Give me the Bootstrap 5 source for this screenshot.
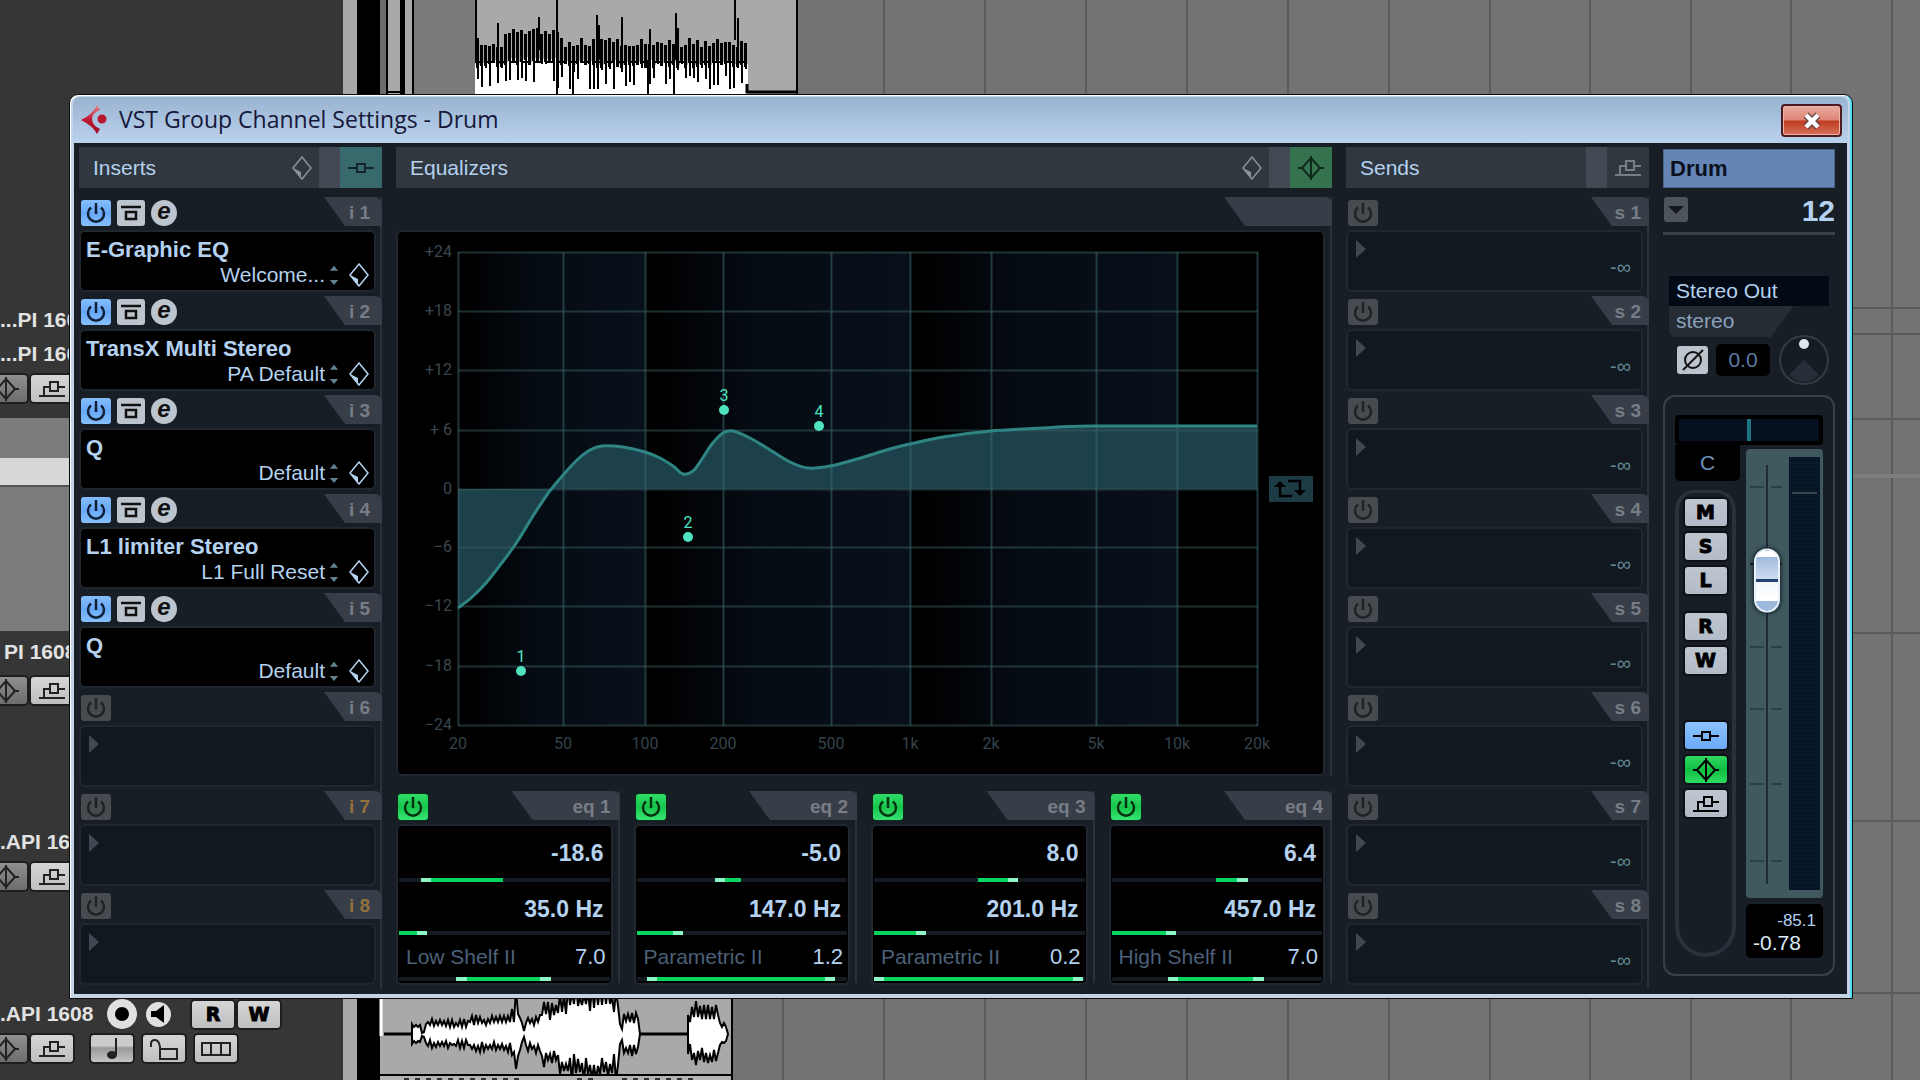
<!DOCTYPE html>
<html lang="en">
<head>
<meta charset="utf-8">
<meta name="viewport" content="width=device-width, initial-scale=1">
<title>VST Group Channel Settings - Drum</title>
<link href="https://cdn.jsdelivr.net/npm/bootstrap@5.3.0/dist/css/bootstrap.min.css" rel="stylesheet">
<style>
:root{--ice:#b4d2ef;--panel:#181e26;--edge:#20272f;--tab:#373e48;--muted:#777d86}
body{background:#727272;font-family:"Liberation Sans",Arial,sans-serif;font-size:21px;line-height:24px;color:var(--ice)}
button{border:0;padding:0;font-family:inherit}
svg{display:block}
.ico{fill:none;stroke:currentColor;stroke-width:2}
.desk{min-height:100vh}
.backdrop-art{position:absolute;inset:0;width:100%;height:100%}

/* track list behind the dialog */
.tracks{width:343px;min-height:100vh;background:#363636;color:#e2e2e2;font-weight:700}
.tk-top{height:418px;padding-bottom:16px}
.tk-line{height:34px;line-height:34px;white-space:nowrap}
.tk-gray{background:#7b7b7b}
.tk-sel{height:27px;background:#d8d8d8}
.chip{width:42px;height:27px;border-radius:3px;background:linear-gradient(#d6d6d6,#bfbfbf);color:#222;display:flex;align-items:center;justify-content:center;box-shadow:0 0 0 2px #1e1e1e;flex:none}
.chip-dim{background:linear-gradient(#8f8f8f,#6d6d6d)}
.chip-bold{font:700 19px/27px "DejaVu Sans",sans-serif;color:#000;-webkit-text-stroke:1px #000}
.orb{border-radius:50%;background:#e0e0e0;flex:none;display:flex;align-items:center;justify-content:center;color:#111}
.tk-off{margin-left:-15px}

/* dialog */
.dlg{position:absolute;left:69px;right:67px;top:94px;border:1px solid #0c0c0c;border-radius:9px 9px 0 0;background:#c4d3e6;box-shadow:inset 1px 1px #fff,inset -2px 0 #4fe0f4;padding:1px 5px 4px 4px}
.dlg-title{height:46px;background:linear-gradient(#98b3d0,#bbd2ee);margin:1px -1px 0 -1px;border-radius:7px 7px 0 0;padding:0 6px 0 8px;color:#15183a;font:400 23px/45px "Open Sans",sans-serif}
.closer{width:61px;height:33px;border:2px solid #4d1a1e;border-radius:4px;background:linear-gradient(#e9aba0,#df8476 48%,#bf3c22 52%,#d9705a);box-shadow:inset 0 0 0 1px #f0b3aa}
.dlg-main{background:var(--panel);display:grid;grid-template-columns:303px minmax(0,1fr) 303px 172px;column-gap:14px;padding:4px 12px 5px 5px}
.head{height:41px;background:#31373f;margin-bottom:9px;padding-left:14px}
.head h2{font-size:21px;line-height:41px;font-weight:400;margin:0}
.head .sep{width:21px;background:#434952}
.head .hb{width:42px;background:transparent;color:#777d85;display:flex;align-items:center;justify-content:center}
.head .hb-teal{background:#38696c;color:#10262a}
.head .hb-green{background:#35734f;color:#10291d}
.head .gem{width:34px;background:transparent;color:#8d9299}

.slot{height:99px;border-right:2px solid #2b313a}
.slot-top{height:29px;margin-bottom:4px;padding:3px 0 0 2px}
.tabby{position:relative;width:58px;height:29px;margin:-3px -2px 0 auto;background:var(--tab);clip-path:polygon(0 0,100% 0,100% 100%,21px 100%);color:var(--muted);font-weight:700;font-size:19px;line-height:31px;text-align:right;padding-right:12px;border-top-right-radius:7px}
.tab-s{padding-right:8px}
.tab-wide{width:108px;padding-right:9px}
.tab-amber{color:#94713c}
.pwr{width:30px;height:26px;border-radius:3px;background:#474b50;color:#1f2226;display:flex;align-items:center;justify-content:center}
.pwr-on{background:linear-gradient(#83bdfc,#68a8f8 50%,#85c0ff);color:#0f2036}
.pwr-eq{background:linear-gradient(#2fdc69,#19c64c 50%,#35e573);color:#06330f;box-shadow:0 0 0 1px #0b2b18}
.mini{width:28px;height:26px;border-radius:3px;background:#bcc4cd;color:#111;display:flex;align-items:center;justify-content:center}
.mini-e{width:26px;border-radius:50%;font:italic 700 24px/20px "Liberation Sans";padding-bottom:4px}
.well{height:62px;margin-right:4px;border:2px solid var(--edge);border-radius:6px;background:#12181f;position:relative}
.well-on{background:#000;padding:6px 5px 0 5px}
.well-on strong{display:block;font-size:22px;line-height:24px}
.well-on .preset{height:26px;color:var(--ice)}
.plain{background:transparent;color:inherit}
.arrow{padding:8px 0 0 8px;color:#414852}
.inf{padding:23px 10px 0 0;font-size:20px;color:#5f8790}

.eqcol{border-right:2px solid #2b313a}
.eqtop{height:29px;margin-bottom:4px;padding-top:3px}
.graph{margin-right:5px;height:546px;border:2px solid var(--edge);border-radius:6px;background:#000;margin-bottom:15px}
.graph svg.plot{flex:1 1 0;min-width:0;height:542px;overflow:visible;font-family:Roboto,sans-serif;font-size:16px}
.loop{width:44px;height:26px;background:#1d3b45;color:#000;margin:0 10px 28px 0;flex:none}
.bands{display:grid;grid-template-columns:repeat(4,minmax(0,1fr));column-gap:14px}
.band{border-right:2px solid #2b313a;height:192px}
.bandbox{height:161px;margin-right:5px;border:2px solid var(--edge);border-radius:6px;background:#000}
.bandbox b{display:block;font-size:23px;text-align:right;padding-right:7px}
.b1{height:52px;line-height:54px}.b2{height:49px;line-height:54px}
.b3{height:42px;line-height:43px;padding:0 5px 0 8px}
.b3 span{color:#4c6079}.b3 output{font-size:22px}
.trk{appearance:none;-webkit-appearance:none;display:block;height:4px;width:calc(100% - 2px);margin:0 1px;background:#141b22}
.trk::-webkit-slider-thumb{-webkit-appearance:none;width:10px;height:4px;background:transparent}

/* channel strip */
.nm{height:39px;margin:2px 0 0;background:#6485b6;color:#0a1020;font-weight:700;font-size:22px;line-height:37px;padding-left:6px;border:1px solid #4c658c}
.nrow{height:47px;border-bottom:3px solid #3a4048;margin-bottom:41px;padding:9px 0 0 1px}
.nrow b{font-size:30px;line-height:28px}
.dd{width:24px;height:25px;border-radius:3px;background:#4e545c}
.outp{height:30px;margin:0 6px;width:160px;background:#020a16;color:var(--ice);text-align:left;padding-left:7px;line-height:26px}
.inp{height:31px;width:125px;margin:0 6px;background:#252c34;clip-path:polygon(0 0,100% 0,102px 100%,4px 100%,0 27px);color:#8ba3bd;padding-left:7px;line-height:30px}
.gain{height:45px;padding:0 5px 0 14px;margin-bottom:13px}
.zero{width:54px;height:32px;border-radius:5px;background:#000;color:#5b7ba3;text-align:center;line-height:32px}
.strip{border:2px solid #3a4048;border-radius:12px;height:581px;padding:18px 10px 0}
.pan{height:30px;border:4px solid #000;border-radius:4px;background:#06101f}
.pan i{width:4px;height:100%;background:#1b7384;margin:auto;display:block}
.cee{height:36px;background:#000;border-radius:0 0 5px 5px;color:#6d90bd;text-align:center;line-height:36px;width:65px}
.pill{width:61px;height:467px;margin-top:9px;border:4px solid #2a313b;border-top-width:3px;border-radius:20px 20px 31px 31px;padding-top:6px}
.key{width:42px;height:27px;border-radius:3px;background:linear-gradient(#bec6d0,#b2bbc7);color:#000;margin-bottom:7px;font:700 19px/27px "DejaVu Sans",sans-serif;-webkit-text-stroke:1px #000;box-shadow:0 0 0 2px #0d1116;display:flex;align-items:center;justify-content:center}
.k-blue{background:linear-gradient(#8cc2fd,#6aaafa);margin-top:48px}
.k-green{background:linear-gradient(#2fd862,#12be41 50%,#2cdc62)}
.fader{width:77px;height:449px;margin-top:4px;background:#3f595e;border-radius:4px;position:relative}
.fader svg{position:absolute;inset:0}
.fader input{position:absolute;left:21px;top:50%;width:449px;height:26px;transform:translate(-50%,-50%) rotate(-90deg);appearance:none;-webkit-appearance:none;background:transparent;margin:0}
.fader input::-webkit-slider-thumb{-webkit-appearance:none;width:64px;height:26px;border-radius:13px;border:2px solid #e8f0fa;background:linear-gradient(270deg,#fff 0 7px,#9fbbdd 7px,#cfdef0 29px,#23406e 29px 32px,#f2f7fd 32px,#fff 51px,#9db9dc 51px);box-shadow:0 0 4px 1px #14202a}
.read{width:77px;height:54px;margin-top:6px;background:#000;border-radius:5px;padding:7px 7px 0}
.read span{display:block;font-size:17px;line-height:20px;text-align:right}
.read b{display:block;font-weight:400;font-size:21px;line-height:23px;color:#dceafa}
</style>
<script src="https://cdn.jsdelivr.net/npm/bootstrap@5.3.0/dist/js/bootstrap.bundle.min.js"></script>
</head>
<body>
<svg width="0" height="0" class="position-absolute">
  <symbol id="i-power" viewBox="0 0 22 22"><path d="M6 5.500A8 8 0 1 0 16 5.500M11 1V12" fill="none" stroke="currentColor" stroke-width="2.500"/></symbol>
  <symbol id="i-byp" viewBox="0 0 22 20"><path d="M1 4H21M6 9H16V16H6Z" fill="none" stroke="currentColor" stroke-width="2.500"/></symbol>
  <symbol id="i-node" viewBox="0 0 26 14"><path d="M0 7H9M17 7H26M9 3H17V11H9Z" fill="none" stroke="currentColor" stroke-width="2"/></symbol>
  <symbol id="i-eq" viewBox="0 0 26 24"><path d="M0 12H4L13 2L22 12H26M4 12L13 22L22 12M13 0V24" fill="none" stroke="currentColor" stroke-width="2"/></symbol>
  <symbol id="i-send" viewBox="0 0 26 18"><path d="M0 16H26M5 16V7H11M19 7H26M11 2H19V11H11Z" fill="none" stroke="currentColor" stroke-width="2"/></symbol>
  <symbol id="i-gem" viewBox="0 0 20 24"><path d="M10 1L19 12L10 23L1 12Z" fill="none" stroke="currentColor" stroke-width="1.500"/><path d="M1 12L9 16V23Z" fill="currentColor"/></symbol>
  <symbol id="i-spin" viewBox="0 0 10 24"><path d="M5 1L10 7H0ZM5 24L10 18H0Z" fill="#5f8490"/></symbol>
</svg>

<div class="desk position-relative overflow-hidden">
  <svg class="backdrop-art" viewBox="0 0 1920 1080" preserveAspectRatio="xMinYMin slice" id="art" aria-hidden="true"></svg>

  <aside class="tracks position-relative">
    <div class="tk-top d-flex flex-column justify-content-end">
      <div class="tk-line">...PI 1608</div>
      <div class="tk-line">...PI 1608</div>
      <div class="d-flex gap-1 mt-1 tk-off"><span class="chip chip-dim"><svg width="26" height="24"><use href="#i-eq"/></svg></span><span class="chip"><svg width="26" height="18"><use href="#i-send"/></svg></span></div>
    </div>
    <div class="tk-gray" style="height:40px"></div>
    <div class="tk-sel"></div>
    <div class="tk-gray" style="height:146px;border-top:2px solid #555"></div>
    <div class="d-flex flex-column">
      <div class="tk-line mt-1 mb-2 ps-1">PI 1608</div>
      <div class="d-flex gap-1 tk-off"><span class="chip chip-dim"><svg width="26" height="24"><use href="#i-eq"/></svg></span><span class="chip"><svg width="26" height="18"><use href="#i-send"/></svg></span></div>
      <div style="height:121px"></div>
      <div class="tk-line mb-1">.API 1608</div>
      <div class="d-flex gap-1 tk-off"><span class="chip chip-dim"><svg width="26" height="24"><use href="#i-eq"/></svg></span><span class="chip"><svg width="26" height="18"><use href="#i-send"/></svg></span></div>
      <div style="height:107px"></div>
      <div class="d-flex align-items-center tk-line mb-1">
        <span style="width:107px">.API 1608</span>
        <button class="orb" style="width:30px;height:30px" aria-label="Record"><svg width="14" height="14"><circle cx="7" cy="7" r="7"/></svg></button>
        <button class="orb" style="width:25px;height:25px;margin-left:9px" aria-label="Monitor"><svg width="16" height="18"><path d="M0 6H5L13 0V18L5 12H0Z"/></svg></button>
        <button class="chip chip-bold" style="margin-left:21px">R</button>
        <button class="chip chip-bold ms-1">W</button>
      </div>
      <div class="d-flex tk-off">
        <span class="chip chip-dim"><svg width="26" height="24"><use href="#i-eq"/></svg></span>
        <span class="chip ms-1"><svg width="26" height="18"><use href="#i-send"/></svg></span>
        <button class="chip" style="margin-left:18px;background:linear-gradient(#ccc,#ccc 40%,#999 48%,#c4c4c4)" aria-label="Musical time"><svg width="12" height="22"><path d="M10 0V17" class="ico"/><ellipse cx="6" cy="17" rx="5" ry="4" fill="#222"/></svg></button>
        <button class="chip" style="margin-left:10px" aria-label="Lock"><svg width="30" height="22" class="ico"><path d="M2 9V6Q2 2 6 2T11 9V12M11 11H28V21H11Z"/></svg></button>
        <button class="chip" style="margin-left:10px" aria-label="Lanes"><svg width="30" height="14" class="ico"><path d="M1 1H29V13H1ZM10 1V13M20 1V13" /></svg></button>
      </div>
    </div>
  </aside>

  <section class="dlg" role="dialog" aria-labelledby="ttl">
    <div class="dlg-title d-flex align-items-start">
      <svg width="26" height="30" viewBox="0 0 26 30" class="mt-2"><defs><linearGradient id="rg" x2="0" y2="1"><stop stop-color="#e88a90"/><stop offset=".5" stop-color="#c01830"/><stop offset="1" stop-color="#a01028"/></linearGradient></defs><path d="M16 0L19 5Q11 8 11 14T19 24L16 29Q12 21 0 15Q11 10 16 0Z" fill="url(#rg)"/><circle cx="21" cy="14" r="4.500" fill="#b81730"/></svg>
      <span id="ttl" class="flex-grow-1 ms-2 ps-1">VST Group Channel Settings - Drum</span>
      <button class="closer" style="margin-top:7px" aria-label="Close"><svg width="22" height="18" viewBox="0 0 22 18" class="mx-auto"><path d="M5 3L17 15M17 3L5 15" stroke="#5d4040" stroke-width="7"/><path d="M5 3L17 15M17 3L5 15" stroke="#fff" stroke-width="4.500"/></svg></button>
    </div>
    <div class="dlg-main">
      <section>
        <div class="head d-flex"><h2 class="flex-grow-1">Inserts</h2><button class="gem" aria-label="Insert presets"><svg width="20" height="24" class="mx-auto"><use href="#i-gem"/></svg></button><span class="sep"></span><button class="hb hb-teal" aria-label="Bypass inserts"><svg width="26" height="14"><use href="#i-node"/></svg></button></div>
        <div id="inserts"></div>
      </section>
      <section>
        <div class="head d-flex"><h2 class="flex-grow-1">Equalizers</h2><button class="gem" aria-label="Equalizer presets"><svg width="20" height="24" class="mx-auto"><use href="#i-gem"/></svg></button><span class="sep"></span><button class="hb hb-green" aria-label="Bypass equalizers"><svg width="26" height="24"><use href="#i-eq"/></svg></button></div>
        <div class="eqcol">
          <div class="eqtop"><div class="tabby tab-wide"></div></div>
          <div class="graph d-flex align-items-center">
            <svg class="plot" viewBox="398 233 871 542" preserveAspectRatio="none" id="plot" role="img" aria-label="Equalizer curve"></svg>
            <button class="loop" aria-label="Reset curve"><svg width="44" height="26"><path d="M11 7V20H23M19 5H31V17" fill="none" stroke="#000" stroke-width="2.500"/><path d="M5 11L11 5L17 11ZM25 14L31 20L37 14Z"/></svg></button>
          </div>
        </div>
        <div class="bands" id="bands"></div>
      </section>
      <section>
        <div class="head d-flex"><h2 class="flex-grow-1">Sends</h2><span class="sep"></span><button class="hb" aria-label="Bypass sends"><svg width="26" height="18"><use href="#i-send"/></svg></button></div>
        <div id="sends"></div>
      </section>
      <section>
        <div class="nm">Drum</div>
        <div class="nrow d-flex justify-content-between"><button class="dd" aria-label="Channel menu"><svg width="24" height="14"><path d="M4 3H20L12 11Z" fill="#14181e"/></svg></button><b>12</b></div>
        <button class="outp d-block">Stereo Out</button>
        <div class="inp">stereo</div>
        <div class="gain d-flex align-items-center justify-content-between">
          <button class="mini" style="width:31px;height:28px" aria-label="Phase"><svg width="26" height="26" class="ico"><circle cx="13" cy="13" r="8"/><path d="M3 23L23 3"/></svg></button>
          <div class="zero">0.0</div>
          <svg width="52" height="52" role="img" aria-label="Input gain"><circle cx="26" cy="26" r="24" fill="#161c23" stroke="#343a43" stroke-width="2"/><path d="M26 26L11 41Q26 55 41 41Z" fill="#272e37"/><circle cx="26" cy="10" r="5" fill="#dfe6ec"/></svg>
        </div>
        <div class="strip">
          <div class="pan"><i></i></div>
          <div class="d-flex justify-content-between">
            <div>
              <div class="cee">C</div>
              <div class="pill d-flex flex-column align-items-center">
                <button class="key">M</button><button class="key">S</button><button class="key" style="margin-bottom:19px">L</button><button class="key">R</button><button class="key mb-0">W</button>
                <button class="key k-blue" aria-label="Inserts"><svg width="26" height="14"><use href="#i-node"/></svg></button>
                <button class="key k-green" aria-label="Equalizers"><svg width="26" height="24"><use href="#i-eq"/></svg></button>
                <button class="key" aria-label="Sends"><svg width="26" height="18"><use href="#i-send"/></svg></button>
              </div>
            </div>
            <div>
              <div class="fader">
                <svg width="77" height="449" id="fsvg"></svg>
                <input type="range" aria-label="Volume" min="0" max="1000" value="743">
              </div>
              <div class="read"><span>-85.1</span><b>-0.78</b></div>
            </div>
          </div>
        </div>
      </section>
    </div>
  </section>
</div>

<script>
const power='<svg width="22" height="22"><use href="#i-power"/></svg>';
const tri='<div class="arrow"><svg width="10" height="18"><path d="M0 0L10 9L0 18Z" fill="currentColor"/></svg></div>';
const ins=[['E-Graphic EQ','Welcome...'],['TransX Multi Stereo','PA Default'],['Q','Default'],['L1 limiter Stereo','L1 Full Reset'],['Q','Default']];
let h='';
for(let i=0;i<8;i++){
  const on=ins[i];
  h+=`<div class="slot"><div class="slot-top d-flex"><button class="pwr ${on?'pwr-on':''}" aria-label="Insert ${i+1} on">${power}</button>`+
  (on?`<button class="mini" style="margin:0 6px" aria-label="Bypass ${i+1}"><svg width="22" height="20"><use href="#i-byp"/></svg></button><button class="mini mini-e">e</button>`:'')+
  `<div class="tabby ${i>5?'tab-amber':''}">i ${i+1}</div></div>`+
  (on?`<div class="well well-on"><strong>${on[0]}</strong><div class="preset d-flex justify-content-end align-items-center"><button class="plain">${on[1]}</button><svg width="10" height="20" style="margin:0 10px 0 4px"><use href="#i-spin"/></svg><svg width="20" height="24"><use href="#i-gem"/></svg></div></div>`:`<div class="well">${tri}</div>`)+'</div>';
}
inserts.innerHTML=h;
h='';
for(let i=1;i<9;i++)h+=`<div class="slot"><div class="slot-top d-flex"><button class="pwr" aria-label="Send ${i} on">${power}</button><div class="tabby tab-s">s ${i}</div></div><div class="well d-flex justify-content-between">${tri}<span class="inf">-∞</span></div></div>`;
sends.innerHTML=h;

/* each track is a list of [from, to, lit] segments, in 212ths of its width */
const data=[
 ['-18.6','35.0 Hz','Low Shelf II','7.0',[[22,32,1],[32,105,0]],[[0,18,0],[18,28,1]],[[57,68,1],[68,142,0],[142,153,1]]],
 ['-5.0','147.0 Hz','Parametric II','1.2',[[79,89,1],[89,105,0]],[[0,36,0],[36,46,1]],[[10,20,1],[20,190,0],[190,200,1]]],
 ['8.0','201.0 Hz','Parametric II','0.2',[[105,135,0],[135,145,1]],[[0,42,0],[42,52,1]],[[0,10,1],[10,200,0],[200,210,1]]],
 ['6.4','457.0 Hz','High Shelf II','7.0',[[105,126,0],[126,137,1]],[[0,55,0],[55,65,1]],[[57,67,1],[67,142,0],[142,153,1]]]];
function range(s,l){
  const p=v=>(v/2.12).toFixed(1)+'%',c=[`#141b22 ${p(s[0][0])}`];
  s.forEach(a=>c.push(`${a[2]?'#8df5c6':'#06d65f'} ${p(a[0])} ${p(a[1])}`));
  c.push(`#141b22 ${p(s[s.length-1][1])}`);
  return `<input type="range" class="trk" aria-label="${l}" style="background:linear-gradient(90deg,${c})">`;
}
bands.innerHTML=data.map((d,i)=>`<div class="band"><div class="slot-top d-flex"><button class="pwr pwr-eq" aria-label="Band ${i+1} on">${power}</button><div class="tabby tab-wide">eq ${i+1}</div></div><div class="bandbox"><b class="b1">${d[0]}</b>${range(d[4],'Gain')}<b class="b2">${d[1]}</b>${range(d[5],'Frequency')}<div class="b3 d-flex justify-content-between"><span>${d[2]}</span><output>${d[3]}</output></div>${range(d[6],'Quality')}</div></div>`).join('');

/* equalizer plot */
const xs=[458,563,645,723,831,910,991,1096,1177,1257],xl=['20','50','100','200','500','1k','2k','5k','10k','20k'];
const ys=[253,312,371,431,490,548,607,667,726],yl=['+24','+18','+12','+ 6','0','−6','−12','−18','−24'];
let g='<defs><linearGradient id="bg"><stop offset="0" stop-color="#000"/><stop offset=".12" stop-color="#010204"/><stop offset=".4" stop-color="#050b12"/><stop offset="1" stop-color="#08101a"/></linearGradient></defs>';
[[458,645],[645,910],[910,1177]].forEach(b=>g+=`<rect x="${b[0]}" y="253" width="${b[1]-b[0]}" height="473" fill="url(#bg)"/>`);
const pts=[[458,609],[471,599],[486,584],[501,565],[517,543],[533,517],[549,493],[564,475],[577,461],[590,451],[602,447],[623,448],[645,453],[660,459],[673,467],[683,475],[693,472],[702,460],[712,445],[723,434],[733,432],[750,439],[767,449],[790,463],[808,469],[830,467],[857,460],[890,450],[910,445],[943,438],[991,432],[1043,429],[1093,427],[1257,427]];
let dd='M'+pts[0];
for(let i=0;i<pts.length-1;i++){const a=pts[i-1]||pts[i],b=pts[i],c=pts[i+1],e=pts[i+2]||c;const k=(c[0]-b[0])>100?0:1/6;dd+=`C${b[0]+(c[0]-a[0])*k} ${b[1]+(c[1]-a[1])*k} ${c[0]-(e[0]-b[0])*k} ${c[1]-(e[1]-b[1])*k} ${c}`;}
g+=`<path d="${dd}V490H458Z" fill="#1f444f" fill-opacity=".95"/>`;
xs.forEach((x,i)=>g+=`<path d="M${x+.5} 253V727" stroke="#3b6d70" stroke-opacity=".5" stroke-width="2"/><text x="${x}" y="750" text-anchor="middle" fill="#34434b">${xl[i]}</text>`);
ys.forEach((y,i)=>g+=`<path d="M458 ${y+.5}H1258" stroke="#3b5f62" stroke-opacity=".5" stroke-width="2"/><text x="452" y="${y+5}" text-anchor="end" fill="#3a464e">${yl[i]}</text>`);
g+=`<path d="${dd}" fill="none" stroke="#2f8583" stroke-width="3"/>`;
[[521,672],[688,538],[724,411],[819,427]].forEach((p,i)=>g+=`<circle cx="${p[0]}" cy="${p[1]}" r="5" fill="#4fe3c0"/><text x="${p[0]}" y="${p[1]-9}" text-anchor="middle" fill="#4fe3c0">${i+1}</text>`);
plot.innerHTML=g;

/* fader scale and level meter */
let f='<path d="M21 16V435" stroke="#1f2c3c" stroke-width="2"/>';
[38,115,198,260,335,412].forEach((y,i)=>f+=`<path d="M4 ${y}H18M25 ${y}H36" stroke="${i==1?'#0c1216':'#2a4046'}" stroke-width="2"/>`);
f+='<rect x="43" y="8" width="31" height="433" fill="#051426"/>';
for(let y=10;y<440;y+=4)f+=`<path d="M43 ${y}H74" stroke="#0c2029"/>`;
f+='<path d="M46 44H71" stroke="#3c444e" stroke-width="2"/>';
fsvg.innerHTML=f;

/* arrange window: grid and audio clips */
let seed=7;const rnd=()=>(seed=(seed*16807)%2147483647)/2147483647;
let a='<rect x="343" width="1577" height="1080" fill="#737373"/><rect x="343" width="14" height="1080" fill="#a8a8a8"/><rect x="357" width="23" height="1080" fill="#000"/>';
a+='<g stroke="#5b5b5b" stroke-width="2">';
[783,884,985,1086,1187,1288,1389,1490,1590,1691,1791,1892].forEach(x=>a+=`<path d="M${x} 0V1080"/>`);
[308,334,419,633,821,993].forEach(y=>a+=`<path d="M1800 ${y}H1920"/>`);
a+='</g><path d="M1800 476H1920" stroke="#7e7e7e" stroke-width="4"/>';
a+='<rect x="380" width="8" height="95" fill="#6c6c6c"/><rect x="388" width="25" height="95" fill="#a9a9a9"/><rect x="400" width="5" height="95"/><path d="M387 0V95M413 0V95M388 92H405" stroke="#000" stroke-width="2"/><rect x="414" width="61" height="95" fill="#7a7a7a"/><rect x="475" width="322" height="95" fill="#a9a9a9"/>';
/* drum loop: black peaks over a white body */
let wh='M475 94V62',bars='';
for(let x=476;x<746;x+=4){
  const rise=x>500&&x<560?13:0,t=(43-rise+rnd()*10-5)|0,m=(60-rise/4+rnd()*6)|0;
  const dip=rnd()<.5?(76+rnd()*15)|0:(m+rnd()*8)|0;
  wh+=`L${x} ${m}H${x+4}`;
  bars+=`<rect x="${x}" y="${t}" width="3" height="${m-t+3}"/><rect x="${x+1}" y="${m}" width="2" height="${dip-m}"/>`;
}
a+=`<path d="${wh}V94Z" fill="#fff"/>${bars}<path d="M475 62H745" stroke="#000" stroke-width="2" stroke-dasharray="7 5"/>`;
a+='<path d="M476 0V62M557 0V94M735 0V40M797 0V94" stroke="#000" stroke-width="2"/><path d="M597 15V50M599 25V60M622 17V55M676 13V60M678 28V60M738 18V62M498 23V50M539 17V50M650 29V60M573 64V94M648 60V94M674 60V94" stroke="#000" stroke-width="2"/><path d="M747 84V92H797" fill="none" stroke="#000" stroke-width="3"/>';
a+='<rect x="380" y="995" width="353" height="85" fill="#a9a9a9"/><path d="M381 995V1036" stroke="#fff" stroke-width="3"/><path d="M384 1034H728" stroke="#000" stroke-width="3"/>';
const amp=x=>x<422?8:x<426?2:x<470?11:x<512?14:x<515?20:x<519?34:x<523?12:x<526?3:x<542?15:x<558?25:x<620?36:x<624?8:x<640?17:0;
function blob(x0,x1,fn){let t='',b='';for(let x=x0;x<=x1;x+=2){const v=fn(x),s=(x/2)%2?.55:1;t+=`L${x} ${(1034-v*(s+rnd()*.35)).toFixed(0)}`;b=`L${x} ${(1034+v*(s+rnd()*.35)).toFixed(0)}`+b;}
return `<path d="M${x0} 1034${t}L${x1+2} 1034${b}Z" fill="#fff" stroke="#000" stroke-width="2"/>`;}
a+=blob(412,640,amp)+blob(688,726,x=>x<692?16:x<720?25:9);
a+='<rect x="380" y="1075" width="353" height="5" fill="#b4b4b4"/><path d="M732 995V1080M380 1075H732" stroke="#000" stroke-width="2"/><path d="M404 1079H525M577 1079H596M622 1079H695" stroke="#3a3030" stroke-width="2" stroke-dasharray="5 6"/>';
art.innerHTML=a;
</script>
</body>
</html>
